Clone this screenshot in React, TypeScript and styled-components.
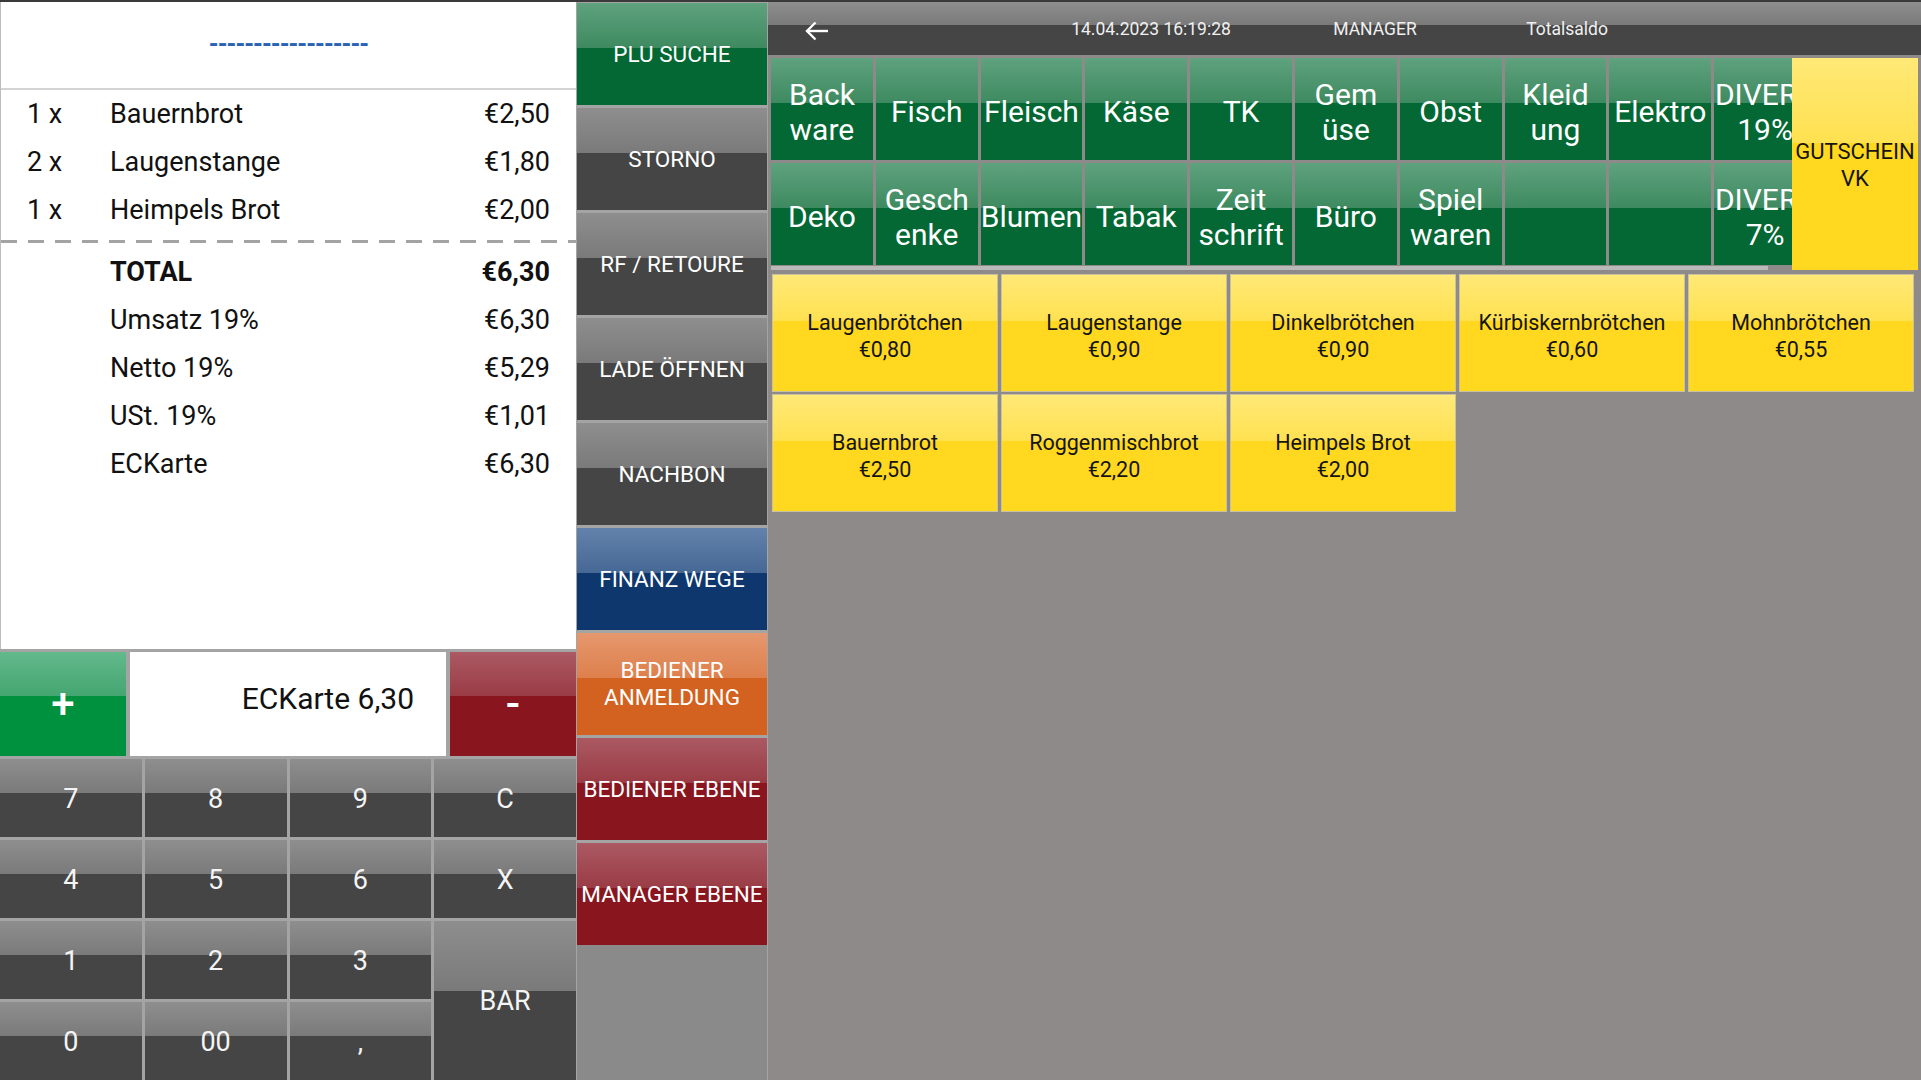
import React from 'react';
import styled, { createGlobalStyle, css } from 'styled-components';

type Tone = 'gray' | 'green' | 'brightGreen' | 'red' | 'blue' | 'orange' | 'yellow';

const palette: Record<Tone, { hi: string; lo: string; base: string; text: string }> = {
  gray: { hi: '#8e8e8e', lo: '#7a7a7a', base: '#454545', text: '#ffffff' },
  green: { hi: '#5ea27e', lo: '#3e8a60', base: '#036833', text: '#ffffff' },
  brightGreen: { hi: '#62b98b', lo: '#45a671', base: '#00913f', text: '#ffffff' },
  red: { hi: '#ab5963', lo: '#9a3c46', base: '#89151f', text: '#ffffff' },
  blue: { hi: '#6282ab', lo: '#466894', base: '#0e376e', text: '#ffffff' },
  orange: { hi: '#e6976e', lo: '#dd804c', base: '#d3611f', text: '#ffffff' },
  yellow: { hi: '#ffe977', lo: '#ffe150', base: '#ffd81f', text: '#141414' },
};

const gloss = (t: Tone, split = 44) => css`
  background: linear-gradient(
    to bottom,
    ${palette[t].hi} 0%,
    ${palette[t].lo} ${split}%,
    ${palette[t].base} ${split}%,
    ${palette[t].base} 100%
  );
  color: ${palette[t].text};
`;

const GlobalStyle = createGlobalStyle`
  html, body {
    margin: 0;
    padding: 0;
    background: #a4a4a4;
  }
  * { box-sizing: border-box; }
  body {
    font-family: Roboto, "Noto Sans", "Liberation Sans", sans-serif;
  }
`;

const Screen = styled.div`
  width: 1921px;
  height: 1080px;
  display: flex;
  border-top: 2px solid #3a3a3a;
  background: #a4a4a4;
  overflow: hidden;
`;

/* ---------- Left column ---------- */

const LeftColumn = styled.div`
  width: 576px;
  display: flex;
  flex-direction: column;
  gap: 3px;
`;

const Receipt = styled.div`
  flex: 1;
  background: #ffffff;
  border-left: 1px solid #bdbdbd;
  display: flex;
  flex-direction: column;
  color: #111111;
  font-size: 27px;
`;

const ReceiptHeader = styled.div`
  height: 88px;
  border-bottom: 2px solid #d3d3d3;
  display: flex;
  align-items: center;
  justify-content: center;
  padding-bottom: 2px;
`;

const HeaderDashes = styled.span`
  color: #2a62b5;
  font-size: 25px;
  font-weight: 700;
  letter-spacing: -1px;
  line-height: 1;
`;

const LineList = styled.div<{ $top?: number }>`
  padding-top: ${(p) => p.$top ?? 0}px;
  display: flex;
  flex-direction: column;
`;

const Line = styled.div<{ $bold?: boolean }>`
  height: 48px;
  display: grid;
  grid-template-columns: 83px 1fr auto;
  align-items: center;
  padding: 0 26px 0 26px;
  font-weight: ${(p) => (p.$bold ? 700 : 400)};
`;

const DashedRule = styled.div`
  height: 3px;
  margin-top: 6px;
  background: repeating-linear-gradient(
    to right,
    #a3a3a3 0px,
    #a3a3a3 16px,
    transparent 16px,
    transparent 27px
  );
`;

const PaymentRow = styled.div`
  height: 104px;
  display: grid;
  grid-template-columns: 126px 1fr 126px;
  gap: 4px;
`;

const SignButton = styled.div<{ $tone: Tone }>`
  ${(p) => gloss(p.$tone, 42)};
  display: flex;
  align-items: center;
  justify-content: center;
  font-size: 42px;
  font-weight: 500;
  padding-bottom: 2px;
`;

const PaymentDisplay = styled.div`
  background: #ffffff;
  display: flex;
  align-items: center;
  justify-content: flex-end;
  padding: 0 32px 12px 0;
  font-size: 30px;
  color: #111111;
`;

const Keypad = styled.div`
  display: grid;
  grid-template-columns: repeat(4, 1fr);
  grid-template-rows: repeat(4, 78px);
  gap: 3px;
`;

const Key = styled.div<{ $span?: number }>`
  ${gloss('gray', 44)};
  grid-row: ${(p) => (p.$span ? `span ${p.$span}` : 'auto')};
  display: flex;
  align-items: center;
  justify-content: center;
  font-size: 27px;
  color: #f4f4f4;
  padding-top: 1px;
`;

/* ---------- Action column ---------- */

const ActionColumn = styled.div`
  width: 190px;
  margin: 0 1px;
  padding-top: 1px;
  display: flex;
  flex-direction: column;
  gap: 3px;
`;

const ActionButton = styled.div<{ $tone: Tone }>`
  ${(p) => gloss(p.$tone, 44)};
  height: 102px;
  flex-shrink: 0;
  display: flex;
  align-items: center;
  justify-content: center;
  text-align: center;
  font-size: 22.5px;
  line-height: 27px;
  white-space: pre-line;
`;

const ActionFiller = styled.div`
  flex: 1;
  background: #8a8a8a;
  margin-top: -3px;
`;

/* ---------- Right panel ---------- */

const RightPanel = styled.div`
  flex: 1;
  background: #8e8a89;
  display: flex;
  flex-direction: column;
`;

const TopBar = styled.div`
  ${gloss('gray', 43)};
  height: 53px;
  display: grid;
  grid-template-columns: 233px 300px 148px 236px 1fr;
  align-items: center;
  font-size: 17.5px;
  color: #f0f0f0;
`;

const BackCell = styled.div`
  padding-left: 36px;
  padding-top: 4px;
  display: flex;
  align-items: center;
`;

const BarText = styled.div`
  text-align: center;
`;

const CategoryArea = styled.div`
  display: flex;
  padding: 3px 3px 0 3px;
`;

const CategoryScroller = styled.div`
  width: 1021px;
  overflow: hidden;
  display: flex;
  flex-direction: column;
`;

const CategoryGrid = styled.div`
  display: grid;
  grid-template-columns: repeat(10, 101.8px);
  grid-template-rows: repeat(2, 102px);
  gap: 3px;
`;

const CategoryButton = styled.div`
  ${gloss('green', 44)};
  display: flex;
  align-items: center;
  justify-content: center;
  text-align: center;
  font-size: 30px;
  line-height: 35px;
  white-space: pre;
  padding-top: 5px;
`;

const ScrollTrack = styled.div`
  width: 997px;
  height: 4px;
  margin-top: 1px;
  background: #b9b9b9;
`;

const VoucherButton = styled.div`
  ${gloss('yellow', 40)};
  width: 126px;
  display: flex;
  align-items: center;
  justify-content: center;
  text-align: center;
  font-size: 22px;
  line-height: 27px;
  white-space: pre;
  padding-top: 2px;
`;

const ProductGrid = styled.div`
  display: grid;
  grid-template-columns: repeat(5, 226px);
  grid-auto-rows: 118px;
  gap: 2px 3px;
  padding: 4px 0 0 4px;
`;

const ProductButton = styled.div`
  ${gloss('yellow', 40)};
  border: 1px solid #c9c2a0;
  display: flex;
  flex-direction: column;
  align-items: center;
  justify-content: center;
  font-size: 21.5px;
  line-height: 27px;
  padding-top: 5px;
`;

/* ---------- Data ---------- */

const items = [
  { qty: '1 x', name: 'Bauernbrot', price: '€2,50' },
  { qty: '2 x', name: 'Laugenstange', price: '€1,80' },
  { qty: '1 x', name: 'Heimpels Brot', price: '€2,00' },
];

const summary = [
  { name: 'TOTAL', price: '€6,30', bold: true },
  { name: 'Umsatz 19%', price: '€6,30' },
  { name: 'Netto 19%', price: '€5,29' },
  { name: 'USt. 19%', price: '€1,01' },
  { name: 'ECKarte', price: '€6,30' },
];

const keys: { label: string; span?: number }[] = [
  { label: '7' }, { label: '8' }, { label: '9' }, { label: 'C' },
  { label: '4' }, { label: '5' }, { label: '6' }, { label: 'X' },
  { label: '1' }, { label: '2' }, { label: '3' }, { label: 'BAR', span: 2 },
  { label: '0' }, { label: '00' }, { label: ',' },
];

const actions: { label: string; tone: Tone }[] = [
  { label: 'PLU SUCHE', tone: 'green' },
  { label: 'STORNO', tone: 'gray' },
  { label: 'RF / RETOURE', tone: 'gray' },
  { label: 'LADE ÖFFNEN', tone: 'gray' },
  { label: 'NACHBON', tone: 'gray' },
  { label: 'FINANZ WEGE', tone: 'blue' },
  { label: 'BEDIENER\nANMELDUNG', tone: 'orange' },
  { label: 'BEDIENER EBENE', tone: 'red' },
  { label: 'MANAGER EBENE', tone: 'red' },
];

const categories = [
  'Back\nware', 'Fisch', 'Fleisch', 'Käse', 'TK', 'Gem\nüse', 'Obst', 'Kleid\nung', 'Elektro', 'DIVERS\n19%',
  'Deko', 'Gesch\nenke', 'Blumen', 'Tabak', 'Zeit\nschrift', 'Büro', 'Spiel\nwaren', '', '', 'DIVERS\n7%',
];

const products = [
  { name: 'Laugenbrötchen', price: '€0,80' },
  { name: 'Laugenstange', price: '€0,90' },
  { name: 'Dinkelbrötchen', price: '€0,90' },
  { name: 'Kürbiskernbrötchen', price: '€0,60' },
  { name: 'Mohnbrötchen', price: '€0,55' },
  { name: 'Bauernbrot', price: '€2,50' },
  { name: 'Roggenmischbrot', price: '€2,20' },
  { name: 'Heimpels Brot', price: '€2,00' },
];

const BackArrow = () => (
  <svg width="25" height="20" viewBox="0 0 25 20" fill="none">
    <path d="M3 10H24" stroke="#ffffff" strokeWidth="2.4" />
    <path d="M11.5 1.5L3 10L11.5 18.5" stroke="#ffffff" strokeWidth="2.4" />
  </svg>
);

export default function App() {
  return (
    <>
      <GlobalStyle />
      <Screen>
        <LeftColumn>
          <Receipt>
            <ReceiptHeader>
              <HeaderDashes>------------------</HeaderDashes>
            </ReceiptHeader>
            <LineList>
              {items.map((it) => (
                <Line key={it.name}>
                  <span>{it.qty}</span>
                  <span>{it.name}</span>
                  <span>{it.price}</span>
                </Line>
              ))}
            </LineList>
            <DashedRule />
            <LineList $top={5}>
              {summary.map((s) => (
                <Line key={s.name} $bold={s.bold}>
                  <span />
                  <span>{s.name}</span>
                  <span>{s.price}</span>
                </Line>
              ))}
            </LineList>
          </Receipt>
          <PaymentRow>
            <SignButton $tone="brightGreen">+</SignButton>
            <PaymentDisplay>ECKarte 6,30</PaymentDisplay>
            <SignButton $tone="red">-</SignButton>
          </PaymentRow>
          <Keypad>
            {keys.map((k) => (
              <Key key={k.label} $span={k.span}>
                {k.label}
              </Key>
            ))}
          </Keypad>
        </LeftColumn>

        <ActionColumn>
          {actions.map((a) => (
            <ActionButton key={a.label} $tone={a.tone}>
              {a.label}
            </ActionButton>
          ))}
          <ActionFiller />
        </ActionColumn>

        <RightPanel>
          <TopBar>
            <BackCell>
              <BackArrow />
            </BackCell>
            <BarText>14.04.2023 16:19:28</BarText>
            <BarText>MANAGER</BarText>
            <BarText>Totalsaldo</BarText>
            <span />
          </TopBar>
          <CategoryArea>
            <CategoryScroller>
              <CategoryGrid>
                {categories.map((c, i) => (
                  <CategoryButton key={i}>{c}</CategoryButton>
                ))}
              </CategoryGrid>
              <ScrollTrack />
            </CategoryScroller>
            <VoucherButton>{'GUTSCHEIN\nVK'}</VoucherButton>
          </CategoryArea>
          <ProductGrid>
            {products.map((p) => (
              <ProductButton key={p.name}>
                <span>{p.name}</span>
                <span>{p.price}</span>
              </ProductButton>
            ))}
          </ProductGrid>
        </RightPanel>
      </Screen>
    </>
  );
}
